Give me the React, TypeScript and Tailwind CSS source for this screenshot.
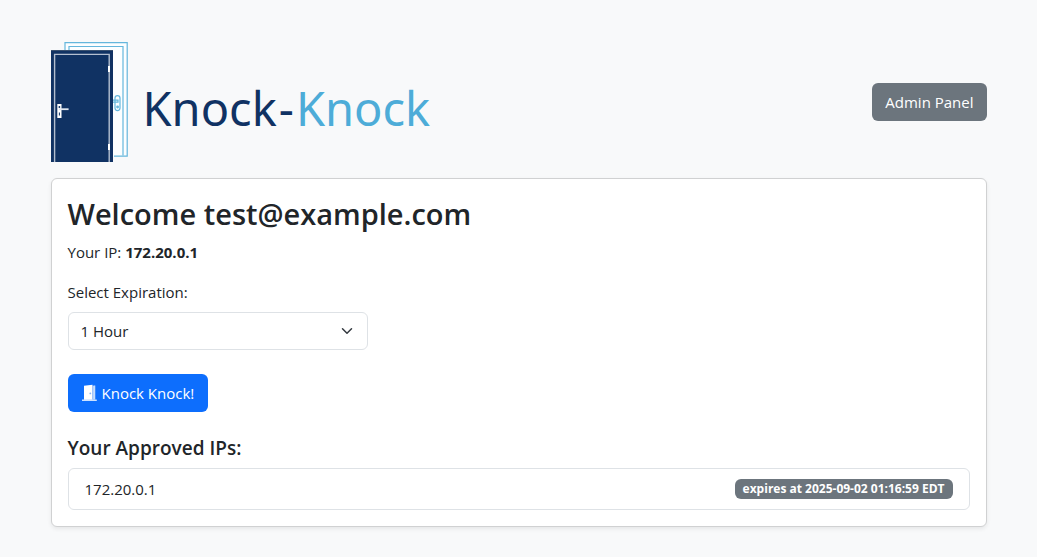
import { useState } from 'react';

const approvedIps = [{ ip: '172.20.0.1', expires: '2025-09-02 01:16:59 EDT' }];

function DoorLogo() {
  return (
    <svg width="78" height="120" viewBox="0 0 78 120" fill="none" aria-hidden="true">
      <g stroke="#64b6dc" strokeWidth="1.2">
        <path d="M14 8V.6H76.2V114.2H63" fill="#fcfeff" />
        <path d="M18 8V4.5H72V113.5" />
        <rect x="64" y="53.6" width="5" height="15" rx="2.5" />
        <path d="M62 58.2H67V60.2H62" />
        <circle cx="66.6" cy="65" r="0.8" />
      </g>
      <rect y="8" width="62" height="112" fill="#103263" />
      <path d="M0 8.5H62" stroke="#39506f" />
      <path d="M3.6 120V12.4H58.2V120" stroke="#b4bfd0" strokeWidth="1.4" />
      <path d="M57 24h2v6h-2zM57 102h2v6h-2z" fill="#fff" />
      <path d="M6.3 62h4.2v14H6.3z" fill="#fff" />
      <path d="M8 67.2h9.6" stroke="#dfe5ee" strokeWidth="1.8" />
      <circle cx="8.4" cy="65" r="0.9" fill="#103263" />
      <path d="M8.4 70.5v3" stroke="#103263" strokeWidth="1" />
    </svg>
  );
}

function DoorIcon() {
  return (
    <svg width="16" height="18" viewBox="0 0 16 18" aria-hidden="true">
      <path d="M2 1.8 10.5.8v15H2z" fill="#fff" />
      <path d="M10.5 1.6h1.8v14h-1.8z" fill="#b9d3fb" />
      <path d="M12.3 1.6h.9v14h-.9z" fill="#fff" />
      <path d="M0 15.6h14.8v1.2H0z" fill="#fff" />
      <circle cx="8.3" cy="9.4" r="0.9" fill="#86b2f5" />
    </svg>
  );
}

export default function App() {
  const [expiration, setExpiration] = useState('1');

  return (
    <div className="min-h-screen bg-[#f8f9fa] font-['Open_Sans','Noto_Sans',sans-serif] text-[15px] leading-6 text-[#212529]">
      <div className="mx-auto max-w-[960px] px-3 pt-[42px] pb-6">
        <header className="mb-4 flex items-center justify-between">
          <div className="flex items-center gap-[14px]">
            <DoorLogo />
            <h1 className="pt-3 font-['Noto_Sans',sans-serif] text-[47px] leading-[58px] text-[#103263]">
              Knock<span className="mx-0.5">-</span>
              <span className="text-[#4dacd8]">Knock</span>
            </h1>
          </div>
          <button type="button" className="rounded-md bg-[#6c757d] px-[13px] py-[7px] text-white">
            Admin Panel
          </button>
        </header>

        <main className="rounded-md border border-[#d0d1d2] bg-white p-4 shadow-[0_2px_4px_rgba(0,0,0,0.075)]">
          <h2 className="mb-2 text-[29px] leading-[37px] font-semibold">Welcome test@example.com</h2>
          <p className="mb-4">
            Your IP: <strong className="font-bold">172.20.0.1</strong>
          </p>
          <form onSubmit={(e) => e.preventDefault()}>
            <label htmlFor="expiration" className="mb-2 block">
              Select Expiration:
            </label>
            <div className="mb-6 grid w-full max-w-[300px] items-center">
              <select
                id="expiration"
                value={expiration}
                onChange={(e) => setExpiration(e.target.value)}
                className="col-start-1 row-start-1 h-[38px] appearance-none rounded-md border border-[#dee2e6] bg-white pr-9 pl-3"
              >
                <option value="1">1 Hour</option>
                <option value="24">24 Hours</option>
              </select>
              <svg
                className="pointer-events-none col-start-1 row-start-1 mr-[13px] justify-self-end"
                width="16"
                height="12"
                viewBox="0 0 16 16"
                fill="none"
                stroke="#343a40"
                strokeWidth="2"
                strokeLinecap="round"
                strokeLinejoin="round"
                aria-hidden="true"
              >
                <path d="m2 5 6 6 6-6" />
              </svg>
            </div>
            <button
              type="submit"
              className="mb-6 flex items-center gap-1 rounded-md bg-[#0d6efd] px-[14px] py-[7px] text-white"
            >
              <DoorIcon />
              Knock Knock!
            </button>
          </form>
          <h3 className="mb-2 text-[19px] leading-6 font-semibold">Your Approved IPs:</h3>
          <ul className="rounded-md border border-[#dee2e6]">
            {approvedIps.map((item) => (
              <li key={item.ip} className="flex items-center justify-between px-4 py-2">
                {item.ip}
                <span className="rounded-md bg-[#6c757d] px-2 py-1 text-xs leading-3 font-bold text-white">
                  expires at {item.expires}
                </span>
              </li>
            ))}
          </ul>
        </main>
      </div>
    </div>
  );
}
